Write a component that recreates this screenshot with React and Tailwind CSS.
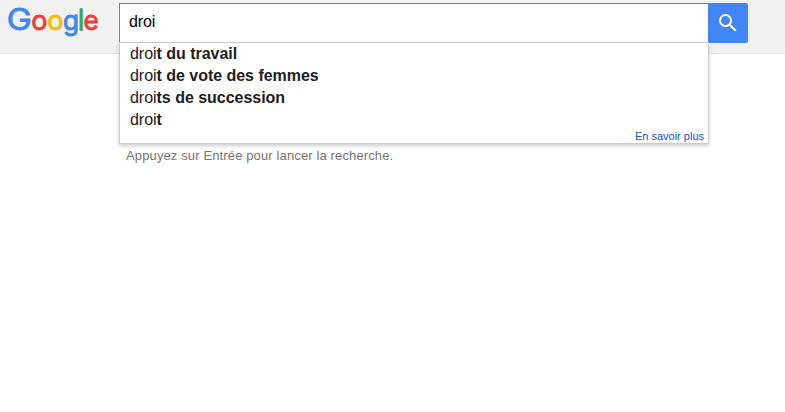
import React, { useState } from "react";

const suggestions = [
  { typed: "droi", rest: "t du travail" },
  { typed: "droi", rest: "t de vote des femmes" },
  { typed: "droi", rest: "ts de succession" },
  { typed: "droi", rest: "t" },
];

function Logo() {
  return (
    <svg width="94" height="42" viewBox="0 0 94 42" className="overflow-visible font-[Inter,sans-serif]" role="img" aria-label="Google">
      <g fontSize="27" strokeWidth="0.9">
        <text x="-0.2" y="30" fontSize="30" textLength="25" lengthAdjust="spacingAndGlyphs" fill="#4285f4" stroke="#4285f4">G</text>
        <text x="24.2" y="29.5" textLength="16.2" lengthAdjust="spacingAndGlyphs" fill="#ea4335" stroke="#ea4335">o</text>
        <text x="40.2" y="29.5" textLength="16.2" lengthAdjust="spacingAndGlyphs" fill="#fbbc05" stroke="#fbbc05">o</text>
        <text x="56" y="29.5" textLength="16" lengthAdjust="spacingAndGlyphs" fill="#4285f4" stroke="#4285f4">g</text>
        <text x="71.6" y="29.5" fontSize="28" textLength="5.2" lengthAdjust="spacingAndGlyphs" fill="#34a853" stroke="#34a853" strokeWidth="1.5">l</text>
        <text x="76.6" y="29.5" textLength="15.2" lengthAdjust="spacingAndGlyphs" fill="#ea4335" stroke="#ea4335">e</text>
      </g>
    </svg>
  );
}

export default function App() {
  const [query, setQuery] = useState("droi");

  return (
    <div className="h-[412px] w-[785px] overflow-hidden bg-white font-['Liberation_Sans',Arial,sans-serif]">
      <header className="flex h-[54px] items-start border-b border-[#e5e5e5] bg-[#f1f1f1] pl-[7px]">
        <div className="w-[112px] shrink-0">
          <Logo />
        </div>

        <form onSubmit={(e) => e.preventDefault()} className="relative mt-[3px] flex">
          <input
            value={query}
            onChange={(e) => setQuery(e.target.value)}
            className="h-10 w-[589px] border-t border-l border-[#4285f4] bg-white pr-2 pb-[3px] pl-[9px] text-base tracking-[-0.1px] text-black outline-none"
          />
          <button type="submit" aria-label="Rechercher" className="flex h-10 w-10 items-center justify-center rounded-r-[2px] bg-[#4285f4]">
            <svg width="24" height="24" viewBox="0 0 24 24" fill="#fff">
              <path d="M15.5 14h-.79l-.28-.27A6.47 6.47 0 0 0 16 9.5 6.5 6.5 0 1 0 9.5 16c1.61 0 3.09-.59 4.23-1.57l.27.28v.79l5 4.99L20.49 19l-4.99-5zm-6 0C7.01 14 5 11.99 5 9.5S7.01 5 9.5 5 14 7.01 14 9.5 11.99 14 9.5 14z" />
            </svg>
          </button>

          {/* suggestions, open over the page */}
          <div className="absolute top-[39px] left-0 h-[102px] w-[590px] border border-[#ccc] bg-white shadow-[0_2px_4px_rgba(0,0,0,0.2)]">
            <ul className="pl-[10px] text-base leading-[22px] tracking-[-0.03px] text-[#212121]">
              {suggestions.map((s) => (
                <li key={s.rest}>
                  {s.typed}
                  <b>{s.rest}</b>
                </li>
              ))}
            </ul>
            <div className="flex justify-end pr-1">
              <a href="#" className="text-[11px] leading-[10px] text-[#1a4fcf]">En savoir plus</a>
            </div>
          </div>
        </form>
      </header>

      <p className="mt-[94px] ml-[126px] text-[13px] leading-4 tracking-[0.13px] text-[#757575]">Appuyez sur Entrée pour lancer la recherche.</p>
    </div>
  );
}
